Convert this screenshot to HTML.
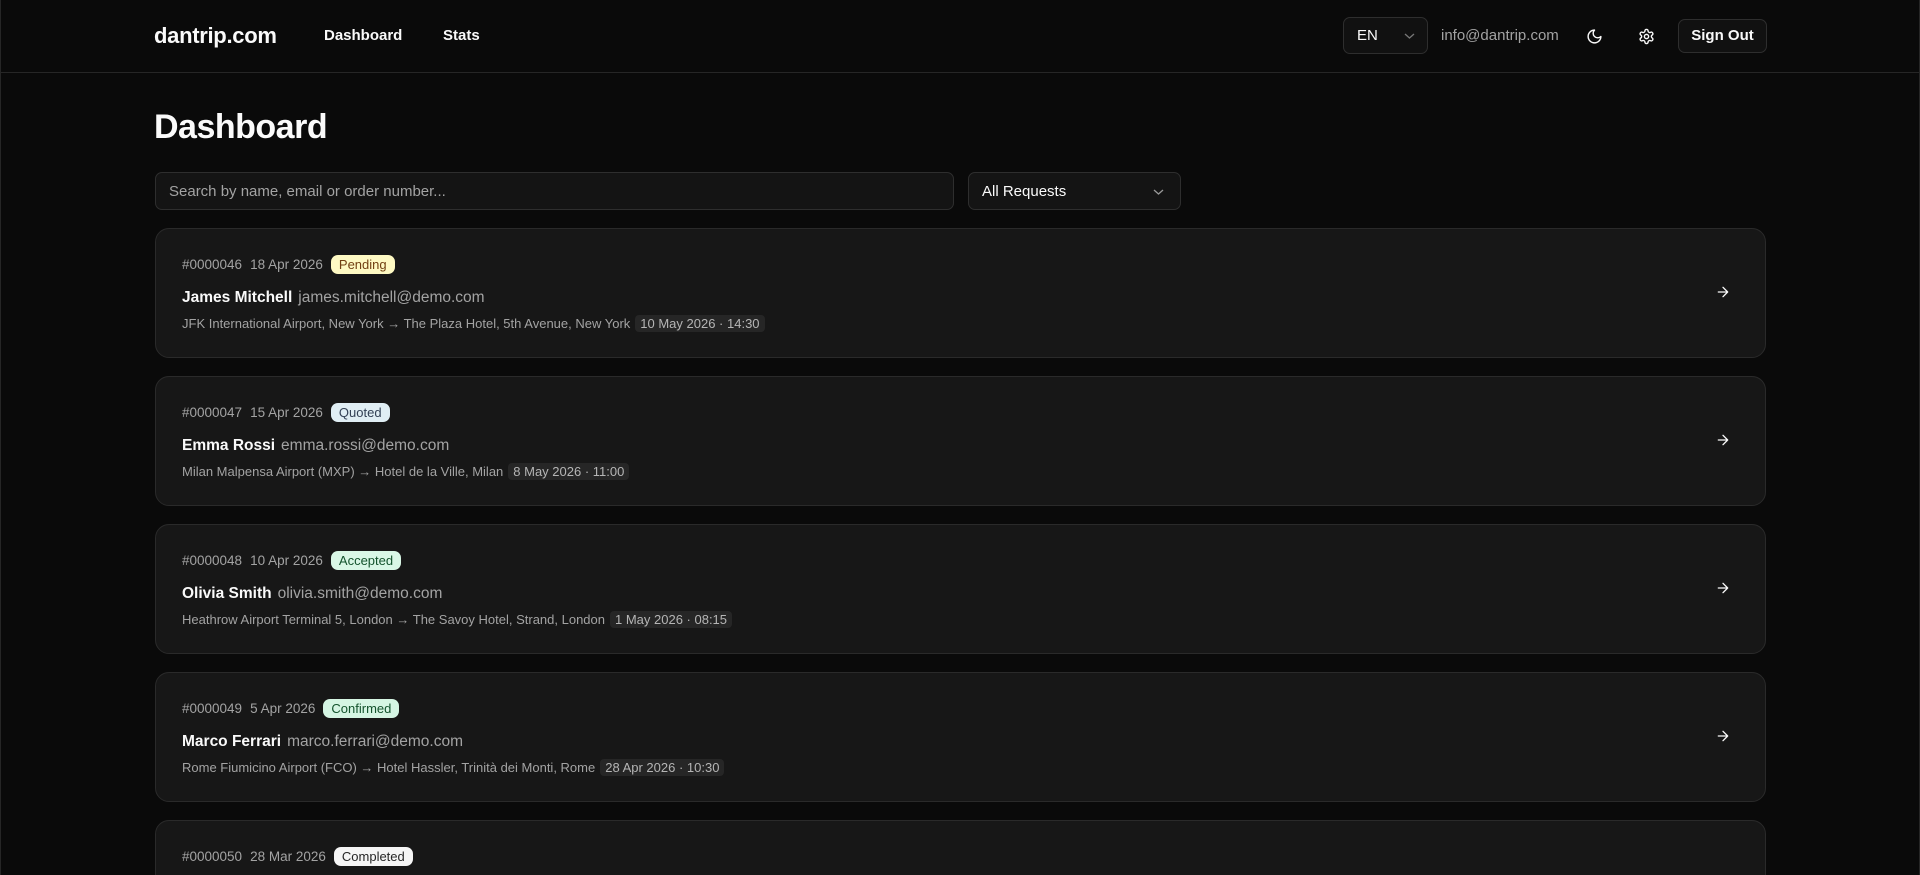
<!DOCTYPE html>
<html style="overflow:hidden;height:875px"><head><meta charset="utf-8"><style>
*{box-sizing:border-box;margin:0;padding:0}
body{width:1920px;height:875px;overflow:hidden;position:relative;background:#0a0a0a;color:#fafafa;font-family:"Liberation Sans",sans-serif;border-left:1px solid #262626;border-right:1px solid #262626}
.hdr{height:73px;border-bottom:1px solid #262626;position:relative}
.abs{position:absolute}
.logo{left:153px;top:23px;font-size:22px;font-weight:bold;letter-spacing:-0.3px}
.nav{top:27px;font-size:15px;font-weight:bold}
.box{border:1px solid #2e2e2e;border-radius:7px;background:#111}
h1{position:absolute;left:153px;top:108px;font-size:34px;font-weight:bold;letter-spacing:-0.5px}
.card{position:absolute;left:154px;width:1611px;height:130px;background:#171717;border:1px solid #2a2a2a;border-radius:14px}
.l1{position:absolute;left:26px;top:26px;font-size:13.5px;color:#a3a3a3;display:flex;align-items:center}
.l1 span{margin-right:8px}
.badge{display:inline-block;height:19px;line-height:19px;padding:0 8px;border-radius:7px;font-size:13px}
.l2{position:absolute;left:26px;top:60px;font-size:15.5px;color:#a3a3a3}
.l2 b{color:#fafafa;margin-right:6px}
.l3{position:absolute;left:26px;top:87px;font-size:13px;color:#a3a3a3}
.dt{background:#262626;border-radius:4px;padding:1px 5px;margin-left:5px;color:#b5b5b5}
.arr{position:absolute;right:34px;top:55px}
</style></head><body>
<div class="hdr">
<div class="abs logo">dantrip.com</div>
<div class="abs nav" style="left:323px">Dashboard</div>
<div class="abs nav" style="left:442px">Stats</div>
<div class="abs box" style="left:1342px;top:17px;width:85px;height:37px"><span style="position:absolute;left:13px;top:9px;font-size:15px">EN</span>
<svg class="abs" style="left:60px;top:14px" width="11" height="8" viewBox="0 0 11 8"><path d="M1 2l4.5 4L10 2" fill="none" stroke="#777" stroke-width="1.3"/></svg></div>
<div class="abs" style="left:1440px;top:27px;font-size:15px;color:#a3a3a3">info@dantrip.com</div>
<svg class="abs" style="left:1585px;top:28px" width="17" height="17" viewBox="0 0 24 24" fill="none" stroke="#fafafa" stroke-width="2" stroke-linecap="round" stroke-linejoin="round"><path d="M12 3a6 6 0 0 0 9 9 9 9 0 1 1-9-9Z"/></svg>
<svg class="abs" style="left:1637px;top:28px" width="17" height="17" viewBox="0 0 24 24" fill="none" stroke="#fafafa" stroke-width="2" stroke-linecap="round" stroke-linejoin="round"><path d="M12.22 2h-.44a2 2 0 0 0-2 2v.18a2 2 0 0 1-1 1.73l-.43.25a2 2 0 0 1-2 0l-.15-.08a2 2 0 0 0-2.73.73l-.22.38a2 2 0 0 0 .73 2.73l.15.1a2 2 0 0 1 1 1.72v.51a2 2 0 0 1-1 1.740l-.15.09a2 2 0 0 0-.73 2.73l.22.38a2 2 0 0 0 2.73.73l.15-.08a2 2 0 0 1 2 0l.43.25a2 2 0 0 1 1 1.73V20a2 2 0 0 0 2 2h.44a2 2 0 0 0 2-2v-.18a2 2 0 0 1 1-1.73l.43-.25a2 2 0 0 1 2 0l.15.08a2 2 0 0 0 2.73-.73l.22-.39a2 2 0 0 0-.73-2.73l-.15-.08a2 2 0 0 1-1-1.74v-.5a2 2 0 0 1 1-1.74l.15-.09a2 2 0 0 0 .73-2.73l-.22-.38a2 2 0 0 0-2.73-.73l-.15.08a2 2 0 0 1-2 0l-.43-.25a2 2 0 0 1-1-1.730V4a2 2 0 0 0-2-2z"/><circle cx="12" cy="12" r="3"/></svg>
<div class="abs box" style="left:1677px;top:19px;width:89px;height:34px;text-align:center;line-height:32px;font-size:15px;font-weight:bold">Sign Out</div>
</div>
<h1>Dashboard</h1>
<div class="abs box" style="left:154px;top:172px;width:799px;height:38px;background:#141414"><span style="position:absolute;left:13px;top:10px;font-size:15px;color:#a3a3a3">Search by name, email or order number...</span></div>
<div class="abs box" style="left:967px;top:172px;width:213px;height:38px;background:#141414"><span style="position:absolute;left:13px;top:10px;font-size:15px;color:#fafafa">All Requests</span>
<svg class="abs" style="left:184px;top:15px" width="11" height="8" viewBox="0 0 11 8"><path d="M1 2l4.5 4L10 2" fill="none" stroke="#999" stroke-width="1.3"/></svg></div>

<div class="card" style="top:228px"><div class="l1"><span>#0000046</span><span>18 Apr 2026</span><span class="badge" style="background:#fef9c3;color:#713f12">Pending</span></div>
<div class="l2"><b>James Mitchell</b>james.mitchell@demo.com</div>
<div class="l3">JFK International Airport, New York → The Plaza Hotel, 5th Avenue, New York<span class="dt">10 May 2026 · 14:30</span></div>
<svg class="arr" width="16" height="16" viewBox="0 0 24 24" fill="none" stroke="#fafafa" stroke-width="2" stroke-linecap="round" stroke-linejoin="round"><path d="M5 12h14M12 5l7 7-7 7"/></svg></div>

<div class="card" style="top:376px"><div class="l1"><span>#0000047</span><span>15 Apr 2026</span><span class="badge" style="background:#e0eef4;color:#334155">Quoted</span></div>
<div class="l2"><b>Emma Rossi</b>emma.rossi@demo.com</div>
<div class="l3">Milan Malpensa Airport (MXP) → Hotel de la Ville, Milan<span class="dt">8 May 2026 · 11:00</span></div>
<svg class="arr" width="16" height="16" viewBox="0 0 24 24" fill="none" stroke="#fafafa" stroke-width="2" stroke-linecap="round" stroke-linejoin="round"><path d="M5 12h14M12 5l7 7-7 7"/></svg></div>

<div class="card" style="top:524px"><div class="l1"><span>#0000048</span><span>10 Apr 2026</span><span class="badge" style="background:#d9f7e6;color:#14532d">Accepted</span></div>
<div class="l2"><b>Olivia Smith</b>olivia.smith@demo.com</div>
<div class="l3">Heathrow Airport Terminal 5, London → The Savoy Hotel, Strand, London<span class="dt">1 May 2026 · 08:15</span></div>
<svg class="arr" width="16" height="16" viewBox="0 0 24 24" fill="none" stroke="#fafafa" stroke-width="2" stroke-linecap="round" stroke-linejoin="round"><path d="M5 12h14M12 5l7 7-7 7"/></svg></div>

<div class="card" style="top:672px"><div class="l1"><span>#0000049</span><span>5 Apr 2026</span><span class="badge" style="background:#d5f5e3;color:#14532d">Confirmed</span></div>
<div class="l2"><b>Marco Ferrari</b>marco.ferrari@demo.com</div>
<div class="l3">Rome Fiumicino Airport (FCO) → Hotel Hassler, Trinità dei Monti, Rome<span class="dt">28 Apr 2026 · 10:30</span></div>
<svg class="arr" width="16" height="16" viewBox="0 0 24 24" fill="none" stroke="#fafafa" stroke-width="2" stroke-linecap="round" stroke-linejoin="round"><path d="M5 12h14M12 5l7 7-7 7"/></svg></div>

<div class="card" style="top:820px;height:70px"><div class="l1"><span>#0000050</span><span>28 Mar 2026</span><span class="badge" style="background:#f5f5f5;color:#262626">Completed</span></div></div>
</body></html>
